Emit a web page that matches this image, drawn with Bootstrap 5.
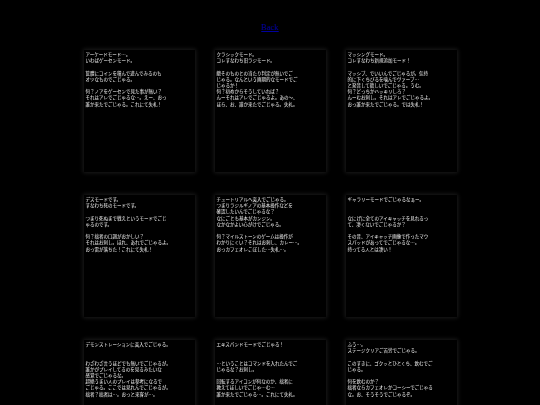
<!DOCTYPE html>
<html lang="ja">
<head>
<meta charset="utf-8">
<title>Mode</title>
<link href="https://cdn.jsdelivr.net/npm/bootstrap@5.3.0/dist/css/bootstrap.min.css" rel="stylesheet">
<style>
html,body{background:#000;height:405px;overflow:hidden}
.stage{width:372px;padding-top:23px}
.backlink{color:#0000a0;font:8.5px/9px "Liberation Serif",serif;height:27px;opacity:.99}
.backlink a{color:inherit}
.modes{display:grid;grid-template-columns:repeat(3,111px);grid-auto-rows:122px;column-gap:20px;row-gap:23px}
.modebox{background:#000;box-shadow:0 0 4px 1px #1b1b1b;padding:1px 1.5px;color:#f4f4f4;font:4.5px/6.2px "Noto Sans CJK JP",sans-serif;white-space:nowrap;overflow:hidden;will-change:transform}
</style>
</head>
<body>
<div class="stage mx-auto">
<div class="backlink text-center"><a href="#">Back</a></div>
<div class="modes">
<div class="modebox">アーケードモード…。<br>いわばゲーセンモード。<br><br>筐體にコインを積んで遊んでみるのも<br>オツなものでごじゃる。<br><br>何？ノアをゲーセンで見た事が無い？<br>それはアレでごじゃるな…。えー、おっ<br>誰か来たでごじゃる。これにて失礼！</div>
<div class="modebox">クラシックモード。<br>コレすなわち旧ラジモード。<br><br>敵そのものとの当たり判定が無いでご<br>じゃる。なんという画期的なモードでご<br>じゃるか！<br>何？初めからそうしていれば？<br>んーそれはアレでごじゃるよ。あの〜、<br>ほら、お、誰か来たでごじゃる。失礼。</div>
<div class="modebox">マッシングモード。<br>コレすなわち新規追加モード！<br><br>マッシブ、でいいんでごじゃるが。気持<br>的に下くちびるを噛んでヴァーブ…<br>と発音して欲しいでごじゃる。うむ。<br>何？どっちかハッキリしろ？<br>んーむお刺し。それはアレでごじゃるよ。<br>おっ誰か来たでごじゃる。では失礼！</div>
<div class="modebox">デスモードです。<br>すなわち死のモードです。<br><br>つまり死ぬまで戦えというモードでごじ<br>ゃるのです。<br><br>何？拙者の口調がおかしい？<br>それはお刺し。ほれ、あれでごじゃるよ。<br>おっ雷が落ちた！これにて失礼！</div>
<div class="modebox">チュートリアルへ突入でごじゃる。<br>つまりラジルギノアの基本操作などを<br>確認したいんでごじゃるな？<br>なにごとも基本がカンジン。<br>なかなかよい心がけでごじゃる。<br><br>何？マイルストーンのゲームは操作が<br>わかりにくい？それはお刺し、カレー…。<br>おっカフェオレこぼした…失礼…。</div>
<div class="modebox">ギャラリーモードでごじゃるなぁー。<br><br><br>なにげに全てのアイキャッチを見れるっ<br>て、凄くないでごじゃるか？<br><br>その昔、アイキャッチ画像で作ったマウ<br>スパッドがあってでごじゃるな…。<br>持ってる人とは凄い！</div>
<div class="modebox">デモンストレーションに突入でごじゃる。<br><br><br>わざわざ言うほどでも無いでごじゃるが。<br>誰かがプレイしてるのを見るみたいな<br>感覚でごじゃるな。<br>超絶うまい人のプレイは参考になるで<br>ごじゃる。ここでは見れんでごじゃるが。<br>拙者？拙者は…。おっと来客が…。</div>
<div class="modebox">エキスパンドモードでごじゃる！<br><br><br>…ということはコマンドを入れたんでご<br>じゃるな？お刺し。<br><br>回転するアイコンが何なのか、拙者に<br>教えてほしいでごじゃ…む…<br>誰か来たでごじゃる…。これにて失礼。</div>
<div class="modebox">ふう…。<br>ステージクリアご苦労でごじゃる。<br><br>このすきに、ゴクッとひとくち、飲むでご<br>じゃる。<br><br>何を飲むのか？<br>拙者ならカフェオレかコーシーでごじゃる<br>な。お、そうそうでごじゃるぞ。</div>
</div>
</div>
<script src="https://cdn.jsdelivr.net/npm/bootstrap@5.3.0/dist/js/bootstrap.bundle.min.js"></script>
</body>
</html>
